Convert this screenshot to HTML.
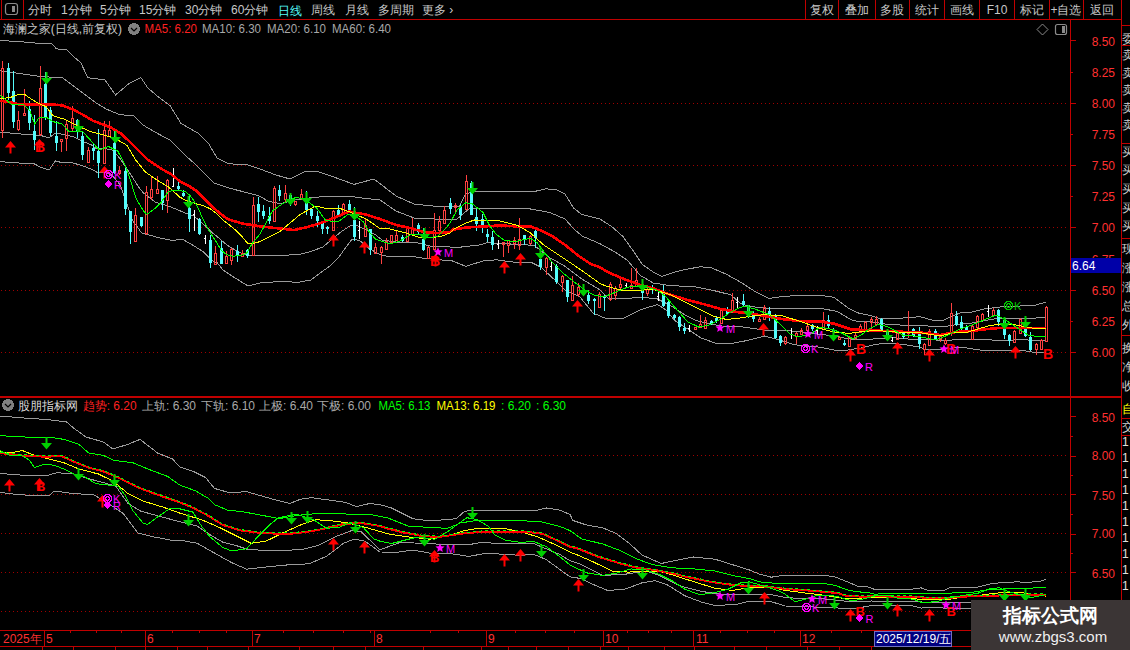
<!DOCTYPE html>
<html><head><meta charset="utf-8">
<style>
html,body{margin:0;padding:0;background:#000;}
body{width:1130px;height:650px;overflow:hidden;position:relative;font-family:"Liberation Sans",sans-serif;}
svg{position:absolute;left:0;top:0;}
text{font-family:"Liberation Sans",sans-serif;}
</style></head><body>
<svg width="1130" height="650" viewBox="0 0 1130 650" shape-rendering="crispEdges">
<rect x="0" y="0" width="1130" height="650" fill="#000"/>
<!-- toolbar -->
<g stroke="#c00000" fill="none">
<line x1="0" y1="19.5" x2="1121" y2="19.5"/>
<line x1="1.5" y1="0" x2="1.5" y2="19"/>
<line x1="23.5" y1="0" x2="23.5" y2="19"/>
<line x1="805.5" y1="0" x2="805.5" y2="19"/>
<line x1="838.5" y1="0" x2="838.5" y2="19"/>
<line x1="875.5" y1="0" x2="875.5" y2="19"/>
<line x1="909.5" y1="0" x2="909.5" y2="19"/>
<line x1="944.5" y1="0" x2="944.5" y2="19"/>
<line x1="979.5" y1="0" x2="979.5" y2="19"/>
<line x1="1014.5" y1="0" x2="1014.5" y2="19"/>
<line x1="1049.5" y1="0" x2="1049.5" y2="19"/>
<line x1="1083.5" y1="0" x2="1083.5" y2="19"/>
<line x1="1121.5" y1="0" x2="1121.5" y2="650"/>
<line x1="1070.5" y1="19" x2="1070.5" y2="646"/>
<line x1="0" y1="396.5" x2="1121" y2="396.5"/>
<line x1="0" y1="397.5" x2="1121" y2="397.5"/>
<line x1="0" y1="630.5" x2="1121" y2="630.5"/>
<line x1="0" y1="646.5" x2="1121" y2="646.5"/>
</g>
<rect x="5.5" y="3.5" width="12" height="11" rx="2.5" fill="none" stroke="#8a8a8a" stroke-width="1.2" shape-rendering="auto"/>
<rect x="12" y="6" width="3" height="6" fill="#8a8a8a"/>
<g font-size="12" fill="#c8c8c8">
<text x="28" y="14">分时</text>
<text x="61" y="14">1分钟</text>
<text x="100" y="14">5分钟</text>
<text x="139" y="14">15分钟</text>
<text x="185" y="14">30分钟</text>
<text x="231" y="14">60分钟</text>
<text x="278" y="15" fill="#54fcfc">日线</text>
<text x="311" y="14">周线</text>
<text x="345" y="14">月线</text>
<text x="378" y="14">多周期</text>
<text x="422" y="14">更多 ›</text>
<g text-anchor="middle">
<text x="822" y="14">复权</text>
<text x="857" y="14">叠加</text>
<text x="892" y="14">多股</text>
<text x="927" y="14">统计</text>
<text x="962" y="14">画线</text>
<text x="997" y="14">F10</text>
<text x="1032" y="14">标记</text>
<text x="1066" y="14">+自选</text>
<text x="1102" y="14">返回</text>
</g>
</g>
<!-- main title -->
<g font-size="12">
<text x="3" y="33" fill="#c8c8c8" textLength="119" lengthAdjust="spacingAndGlyphs">海澜之家(日线,前复权)</text>
<circle cx="134" cy="29" r="6" fill="#808080"/>
<path d="M131,28 L134,31 L137,28" stroke="#000" fill="none" stroke-width="1.2" shape-rendering="auto"/>
<text x="144.5" y="33" fill="#ff2020" textLength="52.5" lengthAdjust="spacingAndGlyphs">MA5: 6.20</text>
<text x="202" y="33" fill="#a8a8a8" textLength="59" lengthAdjust="spacingAndGlyphs">MA10: 6.30</text>
<text x="267" y="33" fill="#a8a8a8" textLength="59" lengthAdjust="spacingAndGlyphs">MA20: 6.10</text>
<text x="332" y="33" fill="#a8a8a8" textLength="59" lengthAdjust="spacingAndGlyphs">MA60: 6.40</text>
</g>
<path d="M1042.5,24 L1048,29.5 L1042.5,35 L1037,29.5 Z" fill="none" stroke="#8a8a8a" shape-rendering="auto"/>
<rect x="1055.5" y="24.5" width="11" height="10" rx="2" fill="none" stroke="#8a8a8a" stroke-width="1.2" shape-rendering="auto"/>
<rect x="1062" y="26" width="3" height="7" fill="#8a8a8a"/>
<!-- main axis -->
<g stroke="#c00000">
<line x1="1070" y1="40.5" x2="1076" y2="40.5"/>
<line x1="1070" y1="72.5" x2="1073" y2="72.5"/>
<line x1="1070" y1="103.5" x2="1076" y2="103.5"/>
<line x1="1070" y1="134.5" x2="1073" y2="134.5"/>
<line x1="1070" y1="165.5" x2="1076" y2="165.5"/>
<line x1="1070" y1="196.5" x2="1073" y2="196.5"/>
<line x1="1070" y1="227.5" x2="1076" y2="227.5"/>
<line x1="1070" y1="259.5" x2="1073" y2="259.5"/>
<line x1="1070" y1="290.5" x2="1076" y2="290.5"/>
<line x1="1070" y1="321.5" x2="1073" y2="321.5"/>
<line x1="1070" y1="352.5" x2="1076" y2="352.5"/>
</g>
<g font-size="12" fill="#ff3030" text-anchor="end">
<text x="1115" y="46">8.50</text>
<text x="1115" y="77">8.25</text>
<text x="1115" y="108">8.00</text>
<text x="1115" y="139">7.75</text>
<text x="1115" y="170">7.50</text>
<text x="1115" y="201">7.25</text>
<text x="1115" y="232">7.00</text>
<text x="1115" y="264">6.75</text>
<text x="1115" y="295">6.50</text>
<text x="1115" y="326">6.25</text>
<text x="1115" y="357">6.00</text>
</g>
<rect x="1071" y="258" width="50" height="15" fill="#0000a8"/>
<text x="1072" y="270" font-size="12" fill="#ffffff">6.64</text>
<line x1="1" y1="103.5" x2="1068" y2="103.5" stroke="#a00000" stroke-dasharray="1 3"/><line x1="1" y1="165.5" x2="1068" y2="165.5" stroke="#a00000" stroke-dasharray="1 3"/><line x1="1" y1="227.5" x2="1068" y2="227.5" stroke="#a00000" stroke-dasharray="1 3"/><line x1="1" y1="290.5" x2="1068" y2="290.5" stroke="#a00000" stroke-dasharray="1 3"/><line x1="1" y1="352.5" x2="1068" y2="352.5" stroke="#a00000" stroke-dasharray="1 3"/>
<polyline points="0.0,40.5 18.5,41.5 34.6,43.0 50.8,43.0 56.6,48.9 67.0,50.0 74.0,57.0 80.8,62.7 87.8,77.7 97.0,78.9 105.0,80.0 115.5,95.0 129.0,83.5 141.0,77.7 147.8,88.0 159.0,97.4 170.0,105.5 181.0,123.5 197.7,133.0 208.8,144.0 217.0,158.0 228.0,163.7 247.6,165.0 260.0,169.0 276.0,175.0 290.0,179.0 304.0,172.0 316.0,171.0 330.0,175.6 354.0,184.4 374.0,179.0 396.0,196.0 414.0,204.0 442.0,207.0 450.0,206.0 459.4,206.0 465.8,194.0 474.5,191.0 504.6,191.0 532.6,192.0 545.5,188.8 556.3,189.8 565.0,194.0 573.5,208.0 582.0,214.6 600.0,219.0 612.3,227.0 623.0,236.6 633.8,251.7 642.5,264.6 653.2,272.0 661.8,276.5 674.8,272.0 687.7,269.0 700.6,266.8 711.4,267.8 726.5,274.3 740.0,281.8 755.8,292.0 768.8,298.5 783.8,296.3 805.4,295.2 820.0,295.2 833.9,297.3 847.7,307.7 858.8,313.2 869.9,315.3 878.2,318.0 892.0,318.8 903.0,318.0 920.0,316.7 932.0,320.0 944.0,320.0 948.0,318.0 960.0,313.0 972.0,312.0 984.0,309.0 1000.0,307.0 1020.0,306.0 1036.0,305.0 1046.0,302.0" fill="none" stroke="#9a9a9a"/>
<polyline points="0.0,70.8 23.0,74.0 41.6,76.6 62.4,77.7 76.0,88.0 85.5,95.0 94.7,102.0 106.0,109.0 120.0,114.7 134.0,115.8 143.0,125.0 154.7,132.0 170.0,140.0 183.9,154.0 197.7,166.5 214.3,183.0 231.0,188.6 242.0,191.4 258.6,195.6 268.0,201.0 280.0,203.8 295.4,200.0 310.8,197.7 330.8,196.0 350.8,196.5 366.0,198.5 380.0,200.0 396.0,211.0 414.0,218.0 434.0,219.0 450.0,220.0 457.0,219.0 470.0,208.0 504.6,208.0 530.5,209.0 549.8,212.5 565.0,219.0 573.5,228.6 582.0,236.0 600.0,243.7 614.5,251.7 627.4,260.3 640.3,275.4 653.2,283.0 666.0,285.0 679.0,286.0 696.3,287.0 713.5,290.5 730.8,294.8 740.0,303.0 747.2,306.0 764.5,308.2 794.6,308.2 820.0,308.4 836.6,311.2 853.2,320.9 869.9,321.6 886.5,324.3 900.3,325.0 920.0,325.0 936.0,327.0 948.0,326.0 960.0,324.0 972.0,323.0 988.0,320.0 1000.0,318.0 1020.0,319.0 1036.0,318.0 1046.0,317.0" fill="none" stroke="#9a9a9a"/>
<polyline points="0.0,132.0 18.5,133.8 40.0,135.4 49.2,137.7 55.4,133.0 64.6,134.6 73.8,137.0 83.0,141.5 90.8,144.6 97.0,149.0 104.6,148.5 112.3,150.0 120.0,158.5 129.2,172.3 140.0,189.0 143.5,193.0 155.0,202.0 170.0,206.6 186.6,213.6 193.9,216.0 205.0,225.7 211.9,232.6 217.4,236.8 227.0,245.0 238.2,252.0 249.3,255.5 260.0,255.5 280.0,255.4 298.5,254.6 310.8,251.5 323.0,247.0 332.3,239.0 341.5,231.5 350.8,225.4 357.0,225.4 366.0,230.0 375.4,234.6 382.0,240.0 396.0,242.0 414.0,242.0 430.0,246.0 450.0,247.0 461.5,247.0 481.0,244.8 487.4,242.6 504.6,243.7 526.0,244.8 534.8,245.8 541.2,251.0 549.8,257.7 565.0,266.3 582.0,279.0 600.0,290.0 608.0,298.0 623.0,299.0 640.3,297.0 657.5,299.0 670.5,305.5 683.4,314.0 696.3,320.6 709.2,323.8 722.0,326.0 740.0,326.5 768.8,330.8 790.3,330.8 811.8,333.0 820.0,334.7 833.9,335.4 847.7,338.9 861.5,339.6 875.4,338.9 892.0,337.5 905.9,338.9 920.0,339.6 936.0,340.0 952.0,340.0 972.0,339.0 992.0,340.0 1008.0,341.0 1020.0,339.0 1036.0,341.0 1046.0,340.0" fill="none" stroke="#9a9a9a"/>
<polyline points="0.0,161.6 18.5,163.0 34.6,164.0 40.0,167.0 49.2,170.0 55.4,160.8 63.0,163.0 70.8,162.3 83.0,166.0 90.8,169.0 98.5,173.0 106.0,172.3 112.3,175.4 120.0,184.6 126.2,201.5 132.3,220.0 141.7,233.0 160.0,238.0 173.0,240.6 182.0,239.0 192.5,245.0 203.5,252.0 211.9,260.3 217.4,263.0 223.0,270.0 232.0,276.0 248.0,286.0 260.0,283.0 280.0,281.5 298.5,282.3 310.8,280.0 320.0,273.0 330.8,265.4 338.5,257.7 346.0,247.0 352.3,239.0 360.0,240.8 369.0,248.5 380.0,254.6 390.0,257.0 410.0,256.0 422.0,258.0 442.0,260.0 450.0,260.0 455.0,262.0 465.8,266.3 483.0,261.0 496.0,259.8 513.2,262.0 530.5,262.0 541.2,267.4 556.3,281.4 565.0,290.0 580.0,297.0 593.0,313.0 605.8,318.5 623.0,318.5 640.3,309.8 657.5,304.5 666.0,310.0 674.8,320.6 687.7,329.0 700.6,337.8 715.0,343.0 730.0,343.7 747.2,340.5 764.5,336.0 777.4,339.4 794.6,344.8 820.0,347.2 833.9,350.0 847.7,350.0 861.5,347.9 875.4,344.4 889.2,343.0 903.0,344.4 920.0,347.2 924.0,349.0 944.0,349.0 960.0,347.0 980.0,350.0 1008.0,351.0 1020.0,350.0 1032.0,352.0 1046.0,352.0" fill="none" stroke="#9a9a9a"/>
<rect x="2" y="61" width="1" height="7" fill="#ff4040"/>
<rect x="2" y="130" width="1" height="8" fill="#ff4040"/>
<rect x="1.5" y="68.5" width="2" height="62" fill="none" stroke="#ff4040"/>
<rect x="8" y="63" width="1" height="37" fill="#54fcfc"/>
<rect x="7" y="68" width="3" height="25" fill="#54fcfc"/>
<rect x="13" y="71" width="1" height="57" fill="#54fcfc"/>
<rect x="12" y="91" width="3" height="31" fill="#54fcfc"/>
<rect x="18" y="111" width="1" height="9" fill="#ff4040"/>
<rect x="18" y="129" width="1" height="2" fill="#ff4040"/>
<rect x="17.5" y="120.5" width="2" height="9" fill="none" stroke="#ff4040"/>
<rect x="24" y="89" width="1" height="24" fill="#ff4040"/>
<rect x="24" y="115" width="1" height="1" fill="#ff4040"/>
<rect x="23.5" y="113.5" width="2" height="2" fill="none" stroke="#ff4040"/>
<rect x="29" y="101" width="1" height="29" fill="#54fcfc"/>
<rect x="28" y="109" width="3" height="14" fill="#54fcfc"/>
<rect x="34" y="115" width="1" height="35" fill="#54fcfc"/>
<rect x="33" y="131" width="3" height="9" fill="#54fcfc"/>
<rect x="40" y="66" width="1" height="22" fill="#ff4040"/>
<rect x="40" y="134" width="1" height="2" fill="#ff4040"/>
<rect x="39.5" y="88.5" width="2" height="46" fill="none" stroke="#ff4040"/>
<rect x="45" y="72" width="1" height="48" fill="#54fcfc"/>
<rect x="44" y="84" width="3" height="34" fill="#54fcfc"/>
<rect x="50" y="107" width="1" height="29" fill="#54fcfc"/>
<rect x="49" y="110" width="3" height="23" fill="#54fcfc"/>
<rect x="56" y="121" width="1" height="30" fill="#54fcfc"/>
<rect x="55" y="136" width="3" height="7" fill="#54fcfc"/>
<rect x="61" y="139" width="1" height="0" fill="#ff4040"/>
<rect x="61" y="141" width="1" height="11" fill="#ff4040"/>
<rect x="60.5" y="139.5" width="2" height="2" fill="none" stroke="#ff4040"/>
<rect x="66" y="120" width="1" height="4" fill="#ff4040"/>
<rect x="66" y="138" width="1" height="13" fill="#ff4040"/>
<rect x="65.5" y="124.5" width="2" height="14" fill="none" stroke="#ff4040"/>
<rect x="72" y="106" width="1" height="12" fill="#ff4040"/>
<rect x="72" y="128" width="1" height="3" fill="#ff4040"/>
<rect x="71.5" y="118.5" width="2" height="10" fill="none" stroke="#ff4040"/>
<rect x="77" y="119" width="1" height="19" fill="#54fcfc"/>
<rect x="76" y="120" width="3" height="12" fill="#54fcfc"/>
<rect x="82" y="132" width="1" height="28" fill="#54fcfc"/>
<rect x="81" y="136" width="3" height="19" fill="#54fcfc"/>
<rect x="88" y="147" width="1" height="3" fill="#ff4040"/>
<rect x="88" y="162" width="1" height="1" fill="#ff4040"/>
<rect x="87.5" y="150.5" width="2" height="12" fill="none" stroke="#ff4040"/>
<rect x="93" y="143" width="1" height="17" fill="#54fcfc"/>
<rect x="92" y="148" width="3" height="3" fill="#54fcfc"/>
<rect x="98" y="129" width="1" height="49" fill="#54fcfc"/>
<rect x="97" y="151" width="3" height="12" fill="#54fcfc"/>
<rect x="104" y="121" width="1" height="9" fill="#ff4040"/>
<rect x="104" y="163" width="1" height="0" fill="#ff4040"/>
<rect x="103.5" y="130.5" width="2" height="33" fill="none" stroke="#ff4040"/>
<rect x="109" y="121" width="1" height="9" fill="#ff4040"/>
<rect x="109" y="136" width="1" height="1" fill="#ff4040"/>
<rect x="108.5" y="130.5" width="2" height="6" fill="none" stroke="#ff4040"/>
<rect x="114" y="130" width="1" height="44" fill="#54fcfc"/>
<rect x="113" y="143" width="3" height="30" fill="#54fcfc"/>
<rect x="119" y="166" width="1" height="4" fill="#ff4040"/>
<rect x="119" y="173" width="1" height="2" fill="#ff4040"/>
<rect x="118.5" y="170.5" width="2" height="3" fill="none" stroke="#ff4040"/>
<rect x="125" y="168" width="1" height="47" fill="#54fcfc"/>
<rect x="124" y="171" width="3" height="38" fill="#54fcfc"/>
<rect x="130" y="211" width="1" height="33" fill="#54fcfc"/>
<rect x="129" y="211" width="3" height="21" fill="#54fcfc"/>
<rect x="135" y="208" width="1" height="7" fill="#ff4040"/>
<rect x="135" y="241" width="1" height="0" fill="#ff4040"/>
<rect x="134.5" y="215.5" width="2" height="26" fill="none" stroke="#ff4040"/>
<rect x="141" y="217" width="1" height="10" fill="#54fcfc"/>
<rect x="140" y="217" width="3" height="9" fill="#54fcfc"/>
<rect x="146" y="186" width="1" height="6" fill="#ff4040"/>
<rect x="146" y="233" width="1" height="2" fill="#ff4040"/>
<rect x="145.5" y="192.5" width="2" height="41" fill="none" stroke="#ff4040"/>
<rect x="151" y="176" width="1" height="13" fill="#ff4040"/>
<rect x="151" y="197" width="1" height="3" fill="#ff4040"/>
<rect x="150.5" y="189.5" width="2" height="8" fill="none" stroke="#ff4040"/>
<rect x="157" y="176" width="1" height="13" fill="#ff4040"/>
<rect x="157" y="193" width="1" height="1" fill="#ff4040"/>
<rect x="156.5" y="189.5" width="2" height="4" fill="none" stroke="#ff4040"/>
<rect x="162" y="190" width="1" height="20" fill="#54fcfc"/>
<rect x="161" y="190" width="3" height="13" fill="#54fcfc"/>
<rect x="167" y="179" width="1" height="1" fill="#ff4040"/>
<rect x="167" y="200" width="1" height="13" fill="#ff4040"/>
<rect x="166.5" y="180.5" width="2" height="20" fill="none" stroke="#ff4040"/>
<rect x="173" y="168" width="1" height="19" fill="#ffffff"/>
<rect x="172" y="186" width="2" height="1" fill="#ffffff"/>
<rect x="178" y="181" width="1" height="9" fill="#54fcfc"/>
<rect x="177" y="186" width="3" height="3" fill="#54fcfc"/>
<rect x="183" y="190" width="1" height="7" fill="#54fcfc"/>
<rect x="182" y="193" width="3" height="3" fill="#54fcfc"/>
<rect x="189" y="196" width="1" height="36" fill="#54fcfc"/>
<rect x="188" y="208" width="3" height="11" fill="#54fcfc"/>
<rect x="194" y="210" width="1" height="21" fill="#ffffff"/>
<rect x="193" y="214" width="2" height="1" fill="#ffffff"/>
<rect x="199" y="218" width="1" height="17" fill="#54fcfc"/>
<rect x="198" y="219" width="3" height="15" fill="#54fcfc"/>
<rect x="205" y="235" width="1" height="9" fill="#ffffff"/>
<rect x="204" y="238" width="2" height="1" fill="#ffffff"/>
<rect x="210" y="235" width="1" height="33" fill="#54fcfc"/>
<rect x="209" y="240" width="3" height="23" fill="#54fcfc"/>
<rect x="215" y="246" width="1" height="7" fill="#ff4040"/>
<rect x="215" y="264" width="1" height="1" fill="#ff4040"/>
<rect x="214.5" y="253.5" width="2" height="11" fill="none" stroke="#ff4040"/>
<rect x="221" y="241" width="1" height="23" fill="#54fcfc"/>
<rect x="220" y="248" width="3" height="16" fill="#54fcfc"/>
<rect x="226" y="251" width="1" height="5" fill="#ff4040"/>
<rect x="226" y="263" width="1" height="1" fill="#ff4040"/>
<rect x="225.5" y="256.5" width="2" height="7" fill="none" stroke="#ff4040"/>
<rect x="231" y="248" width="1" height="1" fill="#ff4040"/>
<rect x="231" y="260" width="1" height="5" fill="#ff4040"/>
<rect x="230.5" y="249.5" width="2" height="11" fill="none" stroke="#ff4040"/>
<rect x="237" y="245" width="1" height="17" fill="#54fcfc"/>
<rect x="236" y="251" width="3" height="5" fill="#54fcfc"/>
<rect x="242" y="250" width="1" height="3" fill="#ff4040"/>
<rect x="242" y="256" width="1" height="1" fill="#ff4040"/>
<rect x="241.5" y="253.5" width="2" height="3" fill="none" stroke="#ff4040"/>
<rect x="247" y="249" width="1" height="9" fill="#54fcfc"/>
<rect x="246" y="250" width="3" height="6" fill="#54fcfc"/>
<rect x="253" y="197" width="1" height="8" fill="#ff4040"/>
<rect x="253" y="255" width="1" height="0" fill="#ff4040"/>
<rect x="252.5" y="205.5" width="2" height="50" fill="none" stroke="#ff4040"/>
<rect x="258" y="197" width="1" height="25" fill="#54fcfc"/>
<rect x="257" y="204" width="3" height="8" fill="#54fcfc"/>
<rect x="263" y="205" width="1" height="14" fill="#54fcfc"/>
<rect x="262" y="211" width="3" height="5" fill="#54fcfc"/>
<rect x="269" y="207" width="1" height="17" fill="#54fcfc"/>
<rect x="268" y="216" width="3" height="5" fill="#54fcfc"/>
<rect x="274" y="186" width="1" height="2" fill="#ff4040"/>
<rect x="274" y="221" width="1" height="1" fill="#ff4040"/>
<rect x="273.5" y="188.5" width="2" height="33" fill="none" stroke="#ff4040"/>
<rect x="279" y="185" width="1" height="16" fill="#54fcfc"/>
<rect x="278" y="190" width="3" height="6" fill="#54fcfc"/>
<rect x="285" y="185" width="1" height="8" fill="#ff4040"/>
<rect x="285" y="199" width="1" height="3" fill="#ff4040"/>
<rect x="284.5" y="193.5" width="2" height="6" fill="none" stroke="#ff4040"/>
<rect x="290" y="193" width="1" height="13" fill="#54fcfc"/>
<rect x="289" y="195" width="3" height="5" fill="#54fcfc"/>
<rect x="295" y="201" width="1" height="0" fill="#ff4040"/>
<rect x="295" y="204" width="1" height="2" fill="#ff4040"/>
<rect x="294.5" y="201.5" width="2" height="3" fill="none" stroke="#ff4040"/>
<rect x="301" y="189" width="1" height="5" fill="#ff4040"/>
<rect x="301" y="198" width="1" height="2" fill="#ff4040"/>
<rect x="300.5" y="194.5" width="2" height="4" fill="none" stroke="#ff4040"/>
<rect x="306" y="191" width="1" height="24" fill="#54fcfc"/>
<rect x="305" y="203" width="3" height="7" fill="#54fcfc"/>
<rect x="311" y="208" width="1" height="11" fill="#54fcfc"/>
<rect x="310" y="209" width="3" height="7" fill="#54fcfc"/>
<rect x="317" y="211" width="1" height="16" fill="#54fcfc"/>
<rect x="316" y="216" width="3" height="5" fill="#54fcfc"/>
<rect x="322" y="221" width="1" height="13" fill="#54fcfc"/>
<rect x="321" y="223" width="3" height="6" fill="#54fcfc"/>
<rect x="327" y="226" width="1" height="8" fill="#54fcfc"/>
<rect x="326" y="227" width="3" height="2" fill="#54fcfc"/>
<rect x="333" y="210" width="1" height="1" fill="#ff4040"/>
<rect x="333" y="230" width="1" height="1" fill="#ff4040"/>
<rect x="332.5" y="211.5" width="2" height="19" fill="none" stroke="#ff4040"/>
<rect x="338" y="205" width="1" height="12" fill="#54fcfc"/>
<rect x="337" y="210" width="3" height="6" fill="#54fcfc"/>
<rect x="343" y="203" width="1" height="1" fill="#ff4040"/>
<rect x="343" y="213" width="1" height="1" fill="#ff4040"/>
<rect x="342.5" y="204.5" width="2" height="9" fill="none" stroke="#ff4040"/>
<rect x="349" y="200" width="1" height="11" fill="#54fcfc"/>
<rect x="348" y="204" width="3" height="6" fill="#54fcfc"/>
<rect x="354" y="207" width="1" height="34" fill="#54fcfc"/>
<rect x="353" y="220" width="3" height="17" fill="#54fcfc"/>
<rect x="359" y="221" width="1" height="18" fill="#ffffff"/>
<rect x="358" y="230" width="2" height="1" fill="#ffffff"/>
<rect x="365" y="219" width="1" height="6" fill="#ff4040"/>
<rect x="365" y="236" width="1" height="1" fill="#ff4040"/>
<rect x="364.5" y="225.5" width="2" height="11" fill="none" stroke="#ff4040"/>
<rect x="370" y="229" width="1" height="26" fill="#54fcfc"/>
<rect x="369" y="229" width="3" height="21" fill="#54fcfc"/>
<rect x="375" y="243" width="1" height="4" fill="#ff4040"/>
<rect x="375" y="253" width="1" height="1" fill="#ff4040"/>
<rect x="374.5" y="247.5" width="2" height="6" fill="none" stroke="#ff4040"/>
<rect x="381" y="246" width="1" height="1" fill="#ff4040"/>
<rect x="381" y="252" width="1" height="12" fill="#ff4040"/>
<rect x="380.5" y="247.5" width="2" height="5" fill="none" stroke="#ff4040"/>
<rect x="386" y="238" width="1" height="3" fill="#ff4040"/>
<rect x="386" y="249" width="1" height="1" fill="#ff4040"/>
<rect x="385.5" y="241.5" width="2" height="8" fill="none" stroke="#ff4040"/>
<rect x="391" y="235" width="1" height="0" fill="#ff4040"/>
<rect x="391" y="242" width="1" height="2" fill="#ff4040"/>
<rect x="390.5" y="235.5" width="2" height="7" fill="none" stroke="#ff4040"/>
<rect x="396" y="231" width="1" height="4" fill="#ff4040"/>
<rect x="396" y="240" width="1" height="1" fill="#ff4040"/>
<rect x="395.5" y="235.5" width="2" height="5" fill="none" stroke="#ff4040"/>
<rect x="402" y="235" width="1" height="7" fill="#54fcfc"/>
<rect x="401" y="237" width="3" height="4" fill="#54fcfc"/>
<rect x="407" y="226" width="1" height="2" fill="#ff4040"/>
<rect x="407" y="241" width="1" height="1" fill="#ff4040"/>
<rect x="406.5" y="228.5" width="2" height="13" fill="none" stroke="#ff4040"/>
<rect x="412" y="218" width="1" height="10" fill="#ff4040"/>
<rect x="412" y="234" width="1" height="2" fill="#ff4040"/>
<rect x="411.5" y="228.5" width="2" height="6" fill="none" stroke="#ff4040"/>
<rect x="418" y="223" width="1" height="11" fill="#54fcfc"/>
<rect x="417" y="225" width="3" height="7" fill="#54fcfc"/>
<rect x="423" y="228" width="1" height="23" fill="#54fcfc"/>
<rect x="422" y="239" width="3" height="11" fill="#54fcfc"/>
<rect x="428" y="246" width="1" height="1" fill="#ff4040"/>
<rect x="428" y="258" width="1" height="1" fill="#ff4040"/>
<rect x="427.5" y="247.5" width="2" height="11" fill="none" stroke="#ff4040"/>
<rect x="434" y="213" width="1" height="17" fill="#ff4040"/>
<rect x="434" y="249" width="1" height="1" fill="#ff4040"/>
<rect x="433.5" y="230.5" width="2" height="19" fill="none" stroke="#ff4040"/>
<rect x="439" y="216" width="1" height="5" fill="#ff4040"/>
<rect x="439" y="230" width="1" height="1" fill="#ff4040"/>
<rect x="438.5" y="221.5" width="2" height="9" fill="none" stroke="#ff4040"/>
<rect x="444" y="206" width="1" height="4" fill="#ff4040"/>
<rect x="444" y="223" width="1" height="1" fill="#ff4040"/>
<rect x="443.5" y="210.5" width="2" height="13" fill="none" stroke="#ff4040"/>
<rect x="450" y="198" width="1" height="16" fill="#54fcfc"/>
<rect x="449" y="203" width="3" height="6" fill="#54fcfc"/>
<rect x="455" y="203" width="1" height="2" fill="#ff4040"/>
<rect x="455" y="207" width="1" height="5" fill="#ff4040"/>
<rect x="454.5" y="205.5" width="2" height="2" fill="none" stroke="#ff4040"/>
<rect x="460" y="204" width="1" height="16" fill="#54fcfc"/>
<rect x="459" y="207" width="3" height="8" fill="#54fcfc"/>
<rect x="466" y="175" width="1" height="6" fill="#ff4040"/>
<rect x="466" y="209" width="1" height="1" fill="#ff4040"/>
<rect x="465.5" y="181.5" width="2" height="28" fill="none" stroke="#ff4040"/>
<rect x="471" y="181" width="1" height="34" fill="#54fcfc"/>
<rect x="470" y="183" width="3" height="32" fill="#54fcfc"/>
<rect x="476" y="209" width="1" height="22" fill="#54fcfc"/>
<rect x="475" y="217" width="3" height="7" fill="#54fcfc"/>
<rect x="482" y="214" width="1" height="19" fill="#54fcfc"/>
<rect x="481" y="219" width="3" height="9" fill="#54fcfc"/>
<rect x="487" y="229" width="1" height="13" fill="#54fcfc"/>
<rect x="486" y="234" width="3" height="3" fill="#54fcfc"/>
<rect x="492" y="231" width="1" height="19" fill="#54fcfc"/>
<rect x="491" y="237" width="3" height="8" fill="#54fcfc"/>
<rect x="498" y="240" width="1" height="9" fill="#ffffff"/>
<rect x="497" y="244" width="2" height="1" fill="#ffffff"/>
<rect x="503" y="242" width="1" height="0" fill="#ff4040"/>
<rect x="503" y="244" width="1" height="13" fill="#ff4040"/>
<rect x="502.5" y="242.5" width="2" height="2" fill="none" stroke="#ff4040"/>
<rect x="508" y="240" width="1" height="0" fill="#ff4040"/>
<rect x="508" y="245" width="1" height="8" fill="#ff4040"/>
<rect x="507.5" y="240.5" width="2" height="5" fill="none" stroke="#ff4040"/>
<rect x="514" y="237" width="1" height="3" fill="#ff4040"/>
<rect x="514" y="243" width="1" height="6" fill="#ff4040"/>
<rect x="513.5" y="240.5" width="2" height="3" fill="none" stroke="#ff4040"/>
<rect x="519" y="218" width="1" height="21" fill="#ff4040"/>
<rect x="519" y="245" width="1" height="5" fill="#ff4040"/>
<rect x="518.5" y="239.5" width="2" height="6" fill="none" stroke="#ff4040"/>
<rect x="524" y="235" width="1" height="10" fill="#54fcfc"/>
<rect x="523" y="235" width="3" height="4" fill="#54fcfc"/>
<rect x="530" y="235" width="1" height="1" fill="#ff4040"/>
<rect x="530" y="243" width="1" height="2" fill="#ff4040"/>
<rect x="529.5" y="236.5" width="2" height="7" fill="none" stroke="#ff4040"/>
<rect x="535" y="230" width="1" height="18" fill="#54fcfc"/>
<rect x="534" y="231" width="3" height="7" fill="#54fcfc"/>
<rect x="540" y="248" width="1" height="22" fill="#54fcfc"/>
<rect x="539" y="259" width="3" height="8" fill="#54fcfc"/>
<rect x="546" y="257" width="1" height="1" fill="#ff4040"/>
<rect x="546" y="267" width="1" height="8" fill="#ff4040"/>
<rect x="545.5" y="258.5" width="2" height="9" fill="none" stroke="#ff4040"/>
<rect x="551" y="261" width="1" height="10" fill="#ffffff"/>
<rect x="550" y="266" width="2" height="1" fill="#ffffff"/>
<rect x="556" y="264" width="1" height="20" fill="#54fcfc"/>
<rect x="555" y="266" width="3" height="16" fill="#54fcfc"/>
<rect x="562" y="275" width="1" height="1" fill="#ff4040"/>
<rect x="562" y="282" width="1" height="10" fill="#ff4040"/>
<rect x="561.5" y="276.5" width="2" height="6" fill="none" stroke="#ff4040"/>
<rect x="567" y="280" width="1" height="22" fill="#54fcfc"/>
<rect x="566" y="280" width="3" height="17" fill="#54fcfc"/>
<rect x="572" y="276" width="1" height="9" fill="#ff4040"/>
<rect x="572" y="300" width="1" height="1" fill="#ff4040"/>
<rect x="571.5" y="285.5" width="2" height="15" fill="none" stroke="#ff4040"/>
<rect x="578" y="283" width="1" height="4" fill="#ff4040"/>
<rect x="578" y="294" width="1" height="3" fill="#ff4040"/>
<rect x="577.5" y="287.5" width="2" height="7" fill="none" stroke="#ff4040"/>
<rect x="583" y="288" width="1" height="8" fill="#54fcfc"/>
<rect x="582" y="290" width="3" height="5" fill="#54fcfc"/>
<rect x="588" y="290" width="1" height="14" fill="#54fcfc"/>
<rect x="587" y="295" width="3" height="6" fill="#54fcfc"/>
<rect x="594" y="298" width="1" height="17" fill="#54fcfc"/>
<rect x="593" y="299" width="3" height="2" fill="#54fcfc"/>
<rect x="599" y="292" width="1" height="2" fill="#ff4040"/>
<rect x="599" y="307" width="1" height="1" fill="#ff4040"/>
<rect x="598.5" y="294.5" width="2" height="13" fill="none" stroke="#ff4040"/>
<rect x="604" y="295" width="1" height="16" fill="#54fcfc"/>
<rect x="603" y="296" width="3" height="2" fill="#54fcfc"/>
<rect x="610" y="282" width="1" height="2" fill="#ff4040"/>
<rect x="610" y="299" width="1" height="2" fill="#ff4040"/>
<rect x="609.5" y="284.5" width="2" height="15" fill="none" stroke="#ff4040"/>
<rect x="615" y="286" width="1" height="2" fill="#ff4040"/>
<rect x="615" y="295" width="1" height="5" fill="#ff4040"/>
<rect x="614.5" y="288.5" width="2" height="7" fill="none" stroke="#ff4040"/>
<rect x="620" y="279" width="1" height="5" fill="#ff4040"/>
<rect x="620" y="287" width="1" height="2" fill="#ff4040"/>
<rect x="619.5" y="284.5" width="2" height="3" fill="none" stroke="#ff4040"/>
<rect x="626" y="283" width="1" height="4" fill="#ffffff"/>
<rect x="625" y="285" width="2" height="1" fill="#ffffff"/>
<rect x="631" y="268" width="1" height="17" fill="#ff4040"/>
<rect x="631" y="288" width="1" height="0" fill="#ff4040"/>
<rect x="630.5" y="285.5" width="2" height="3" fill="none" stroke="#ff4040"/>
<rect x="636" y="268" width="1" height="12" fill="#ff4040"/>
<rect x="636" y="286" width="1" height="0" fill="#ff4040"/>
<rect x="635.5" y="280.5" width="2" height="6" fill="none" stroke="#ff4040"/>
<rect x="642" y="281" width="1" height="19" fill="#54fcfc"/>
<rect x="641" y="290" width="3" height="3" fill="#54fcfc"/>
<rect x="647" y="287" width="1" height="2" fill="#ff4040"/>
<rect x="647" y="293" width="1" height="3" fill="#ff4040"/>
<rect x="646.5" y="289.5" width="2" height="4" fill="none" stroke="#ff4040"/>
<rect x="652" y="285" width="1" height="9" fill="#54fcfc"/>
<rect x="651" y="287" width="3" height="2" fill="#54fcfc"/>
<rect x="658" y="290" width="1" height="11" fill="#ffffff"/>
<rect x="657" y="296" width="2" height="1" fill="#ffffff"/>
<rect x="663" y="285" width="1" height="22" fill="#54fcfc"/>
<rect x="662" y="292" width="3" height="14" fill="#54fcfc"/>
<rect x="668" y="301" width="1" height="17" fill="#54fcfc"/>
<rect x="667" y="302" width="3" height="14" fill="#54fcfc"/>
<rect x="674" y="314" width="1" height="6" fill="#54fcfc"/>
<rect x="673" y="315" width="3" height="3" fill="#54fcfc"/>
<rect x="679" y="316" width="1" height="15" fill="#54fcfc"/>
<rect x="678" y="317" width="3" height="10" fill="#54fcfc"/>
<rect x="684" y="323" width="1" height="11" fill="#54fcfc"/>
<rect x="683" y="328" width="3" height="3" fill="#54fcfc"/>
<rect x="689" y="325" width="1" height="7" fill="#ffffff"/>
<rect x="688" y="328" width="2" height="1" fill="#ffffff"/>
<rect x="695" y="327" width="1" height="0" fill="#ff4040"/>
<rect x="695" y="329" width="1" height="1" fill="#ff4040"/>
<rect x="694.5" y="327.5" width="2" height="2" fill="none" stroke="#ff4040"/>
<rect x="700" y="315" width="1" height="9" fill="#ff4040"/>
<rect x="700" y="327" width="1" height="1" fill="#ff4040"/>
<rect x="699.5" y="324.5" width="2" height="3" fill="none" stroke="#ff4040"/>
<rect x="705" y="317" width="1" height="3" fill="#ff4040"/>
<rect x="705" y="328" width="1" height="1" fill="#ff4040"/>
<rect x="704.5" y="320.5" width="2" height="8" fill="none" stroke="#ff4040"/>
<rect x="711" y="320" width="1" height="5" fill="#54fcfc"/>
<rect x="710" y="321" width="3" height="3" fill="#54fcfc"/>
<rect x="716" y="316" width="1" height="7" fill="#54fcfc"/>
<rect x="715" y="318" width="3" height="3" fill="#54fcfc"/>
<rect x="721" y="309" width="1" height="1" fill="#ff4040"/>
<rect x="721" y="323" width="1" height="1" fill="#ff4040"/>
<rect x="720.5" y="310.5" width="2" height="13" fill="none" stroke="#ff4040"/>
<rect x="727" y="307" width="1" height="8" fill="#54fcfc"/>
<rect x="726" y="310" width="3" height="4" fill="#54fcfc"/>
<rect x="732" y="293" width="1" height="7" fill="#ff4040"/>
<rect x="732" y="312" width="1" height="1" fill="#ff4040"/>
<rect x="731.5" y="300.5" width="2" height="12" fill="none" stroke="#ff4040"/>
<rect x="737" y="297" width="1" height="11" fill="#ffffff"/>
<rect x="736" y="302" width="2" height="1" fill="#ffffff"/>
<rect x="743" y="294" width="1" height="12" fill="#54fcfc"/>
<rect x="742" y="301" width="3" height="4" fill="#54fcfc"/>
<rect x="748" y="305" width="1" height="13" fill="#54fcfc"/>
<rect x="747" y="305" width="3" height="12" fill="#54fcfc"/>
<rect x="753" y="311" width="1" height="11" fill="#54fcfc"/>
<rect x="752" y="315" width="3" height="4" fill="#54fcfc"/>
<rect x="759" y="317" width="1" height="2" fill="#ff4040"/>
<rect x="759" y="321" width="1" height="1" fill="#ff4040"/>
<rect x="758.5" y="319.5" width="2" height="2" fill="none" stroke="#ff4040"/>
<rect x="764" y="305" width="1" height="2" fill="#ff4040"/>
<rect x="764" y="319" width="1" height="1" fill="#ff4040"/>
<rect x="763.5" y="307.5" width="2" height="12" fill="none" stroke="#ff4040"/>
<rect x="769" y="307" width="1" height="14" fill="#54fcfc"/>
<rect x="768" y="311" width="3" height="5" fill="#54fcfc"/>
<rect x="775" y="314" width="1" height="25" fill="#54fcfc"/>
<rect x="774" y="316" width="3" height="22" fill="#54fcfc"/>
<rect x="780" y="335" width="1" height="11" fill="#54fcfc"/>
<rect x="779" y="336" width="3" height="7" fill="#54fcfc"/>
<rect x="785" y="336" width="1" height="1" fill="#ff4040"/>
<rect x="785" y="343" width="1" height="2" fill="#ff4040"/>
<rect x="784.5" y="337.5" width="2" height="6" fill="none" stroke="#ff4040"/>
<rect x="791" y="328" width="1" height="11" fill="#ffffff"/>
<rect x="790" y="334" width="2" height="1" fill="#ffffff"/>
<rect x="796" y="332" width="1" height="1" fill="#ff4040"/>
<rect x="796" y="336" width="1" height="8" fill="#ff4040"/>
<rect x="795.5" y="333.5" width="2" height="3" fill="none" stroke="#ff4040"/>
<rect x="801" y="328" width="1" height="2" fill="#ff4040"/>
<rect x="801" y="334" width="1" height="1" fill="#ff4040"/>
<rect x="800.5" y="330.5" width="2" height="4" fill="none" stroke="#ff4040"/>
<rect x="807" y="323" width="1" height="3" fill="#ff4040"/>
<rect x="807" y="330" width="1" height="1" fill="#ff4040"/>
<rect x="806.5" y="326.5" width="2" height="4" fill="none" stroke="#ff4040"/>
<rect x="812" y="324" width="1" height="7" fill="#54fcfc"/>
<rect x="811" y="325" width="3" height="4" fill="#54fcfc"/>
<rect x="817" y="326" width="1" height="9" fill="#ffffff"/>
<rect x="816" y="330" width="2" height="1" fill="#ffffff"/>
<rect x="823" y="312" width="1" height="8" fill="#ff4040"/>
<rect x="823" y="329" width="1" height="1" fill="#ff4040"/>
<rect x="822.5" y="320.5" width="2" height="9" fill="none" stroke="#ff4040"/>
<rect x="828" y="315" width="1" height="13" fill="#54fcfc"/>
<rect x="827" y="320" width="3" height="6" fill="#54fcfc"/>
<rect x="833" y="328" width="1" height="6" fill="#54fcfc"/>
<rect x="832" y="330" width="3" height="2" fill="#54fcfc"/>
<rect x="839" y="336" width="1" height="1" fill="#ff4040"/>
<rect x="839" y="339" width="1" height="1" fill="#ff4040"/>
<rect x="838.5" y="337.5" width="2" height="2" fill="none" stroke="#ff4040"/>
<rect x="844" y="340" width="1" height="6" fill="#54fcfc"/>
<rect x="843" y="343" width="3" height="2" fill="#54fcfc"/>
<rect x="849" y="337" width="1" height="0" fill="#ff4040"/>
<rect x="849" y="346" width="1" height="0" fill="#ff4040"/>
<rect x="848.5" y="337.5" width="2" height="9" fill="none" stroke="#ff4040"/>
<rect x="855" y="333" width="1" height="2" fill="#ff4040"/>
<rect x="855" y="338" width="1" height="2" fill="#ff4040"/>
<rect x="854.5" y="335.5" width="2" height="3" fill="none" stroke="#ff4040"/>
<rect x="860" y="324" width="1" height="2" fill="#ff4040"/>
<rect x="860" y="332" width="1" height="1" fill="#ff4040"/>
<rect x="859.5" y="326.5" width="2" height="6" fill="none" stroke="#ff4040"/>
<rect x="865" y="321" width="1" height="1" fill="#ff4040"/>
<rect x="865" y="329" width="1" height="1" fill="#ff4040"/>
<rect x="864.5" y="322.5" width="2" height="7" fill="none" stroke="#ff4040"/>
<rect x="871" y="317" width="1" height="2" fill="#ff4040"/>
<rect x="871" y="322" width="1" height="7" fill="#ff4040"/>
<rect x="870.5" y="319.5" width="2" height="3" fill="none" stroke="#ff4040"/>
<rect x="876" y="316" width="1" height="3" fill="#ff4040"/>
<rect x="876" y="324" width="1" height="1" fill="#ff4040"/>
<rect x="875.5" y="319.5" width="2" height="5" fill="none" stroke="#ff4040"/>
<rect x="881" y="318" width="1" height="13" fill="#54fcfc"/>
<rect x="880" y="319" width="3" height="11" fill="#54fcfc"/>
<rect x="887" y="329" width="1" height="12" fill="#54fcfc"/>
<rect x="886" y="331" width="3" height="9" fill="#54fcfc"/>
<rect x="892" y="337" width="1" height="5" fill="#ffffff"/>
<rect x="891" y="340" width="2" height="1" fill="#ffffff"/>
<rect x="897" y="331" width="1" height="2" fill="#ff4040"/>
<rect x="897" y="339" width="1" height="1" fill="#ff4040"/>
<rect x="896.5" y="333.5" width="2" height="6" fill="none" stroke="#ff4040"/>
<rect x="903" y="332" width="1" height="7" fill="#54fcfc"/>
<rect x="902" y="333" width="3" height="4" fill="#54fcfc"/>
<rect x="908" y="311" width="1" height="20" fill="#ff4040"/>
<rect x="908" y="333" width="1" height="5" fill="#ff4040"/>
<rect x="907.5" y="331.5" width="2" height="2" fill="none" stroke="#ff4040"/>
<rect x="913" y="328" width="1" height="9" fill="#54fcfc"/>
<rect x="912" y="329" width="3" height="7" fill="#54fcfc"/>
<rect x="919" y="327" width="1" height="22" fill="#54fcfc"/>
<rect x="918" y="334" width="3" height="10" fill="#54fcfc"/>
<rect x="924" y="343" width="1" height="1" fill="#ff4040"/>
<rect x="924" y="349" width="1" height="6" fill="#ff4040"/>
<rect x="923.5" y="344.5" width="2" height="5" fill="none" stroke="#ff4040"/>
<rect x="929" y="329" width="1" height="2" fill="#ff4040"/>
<rect x="929" y="345" width="1" height="1" fill="#ff4040"/>
<rect x="928.5" y="331.5" width="2" height="14" fill="none" stroke="#ff4040"/>
<rect x="935" y="329" width="1" height="11" fill="#54fcfc"/>
<rect x="934" y="331" width="3" height="8" fill="#54fcfc"/>
<rect x="940" y="335" width="1" height="1" fill="#ff4040"/>
<rect x="940" y="339" width="1" height="3" fill="#ff4040"/>
<rect x="939.5" y="336.5" width="2" height="3" fill="none" stroke="#ff4040"/>
<rect x="945" y="338" width="1" height="2" fill="#ff4040"/>
<rect x="945" y="343" width="1" height="2" fill="#ff4040"/>
<rect x="944.5" y="340.5" width="2" height="3" fill="none" stroke="#ff4040"/>
<rect x="951" y="303" width="1" height="10" fill="#ff4040"/>
<rect x="951" y="332" width="1" height="4" fill="#ff4040"/>
<rect x="950.5" y="313.5" width="2" height="19" fill="none" stroke="#ff4040"/>
<rect x="956" y="311" width="1" height="15" fill="#54fcfc"/>
<rect x="955" y="316" width="3" height="9" fill="#54fcfc"/>
<rect x="961" y="316" width="1" height="16" fill="#54fcfc"/>
<rect x="960" y="322" width="3" height="7" fill="#54fcfc"/>
<rect x="966" y="325" width="1" height="7" fill="#54fcfc"/>
<rect x="965" y="327" width="3" height="4" fill="#54fcfc"/>
<rect x="972" y="325" width="1" height="1" fill="#ff4040"/>
<rect x="972" y="339" width="1" height="1" fill="#ff4040"/>
<rect x="971.5" y="326.5" width="2" height="13" fill="none" stroke="#ff4040"/>
<rect x="977" y="315" width="1" height="1" fill="#ff4040"/>
<rect x="977" y="327" width="1" height="2" fill="#ff4040"/>
<rect x="976.5" y="316.5" width="2" height="11" fill="none" stroke="#ff4040"/>
<rect x="982" y="313" width="1" height="1" fill="#ff4040"/>
<rect x="982" y="320" width="1" height="1" fill="#ff4040"/>
<rect x="981.5" y="314.5" width="2" height="6" fill="none" stroke="#ff4040"/>
<rect x="988" y="305" width="1" height="12" fill="#ffffff"/>
<rect x="987" y="311" width="2" height="1" fill="#ffffff"/>
<rect x="993" y="308" width="1" height="2" fill="#ff4040"/>
<rect x="993" y="315" width="1" height="1" fill="#ff4040"/>
<rect x="992.5" y="310.5" width="2" height="5" fill="none" stroke="#ff4040"/>
<rect x="998" y="309" width="1" height="17" fill="#54fcfc"/>
<rect x="997" y="310" width="3" height="12" fill="#54fcfc"/>
<rect x="1004" y="320" width="1" height="19" fill="#54fcfc"/>
<rect x="1003" y="320" width="3" height="15" fill="#54fcfc"/>
<rect x="1009" y="334" width="1" height="12" fill="#54fcfc"/>
<rect x="1008" y="335" width="3" height="6" fill="#54fcfc"/>
<rect x="1014" y="330" width="1" height="1" fill="#ff4040"/>
<rect x="1014" y="342" width="1" height="1" fill="#ff4040"/>
<rect x="1013.5" y="331.5" width="2" height="11" fill="none" stroke="#ff4040"/>
<rect x="1020" y="318" width="1" height="1" fill="#ff4040"/>
<rect x="1020" y="333" width="1" height="1" fill="#ff4040"/>
<rect x="1019.5" y="319.5" width="2" height="14" fill="none" stroke="#ff4040"/>
<rect x="1025" y="323" width="1" height="14" fill="#54fcfc"/>
<rect x="1024" y="324" width="3" height="12" fill="#54fcfc"/>
<rect x="1030" y="332" width="1" height="19" fill="#54fcfc"/>
<rect x="1029" y="337" width="3" height="13" fill="#54fcfc"/>
<rect x="1036" y="343" width="1" height="1" fill="#ff4040"/>
<rect x="1036" y="349" width="1" height="6" fill="#ff4040"/>
<rect x="1035.5" y="344.5" width="2" height="5" fill="none" stroke="#ff4040"/>
<rect x="1041" y="339" width="1" height="1" fill="#ff4040"/>
<rect x="1041" y="349" width="1" height="1" fill="#ff4040"/>
<rect x="1040.5" y="340.5" width="2" height="9" fill="none" stroke="#ff4040"/>
<rect x="1046" y="306" width="1" height="1" fill="#ff4040"/>
<rect x="1046" y="341" width="1" height="1" fill="#ff4040"/>
<rect x="1045.5" y="307.5" width="2" height="34" fill="none" stroke="#ff4040"/>
<polyline points="0.0,100.8 9.2,102.0 18.5,104.3 32.3,104.3 50.8,104.3 62.4,105.4 71.6,109.0 83.0,114.7 92.4,120.5 101.6,124.0 110.8,127.4 122.0,134.3 134.0,145.9 147.8,159.7 161.6,169.0 170.0,173.4 180.0,181.4 188.3,185.5 196.6,191.0 205.0,199.4 213.2,207.7 221.5,214.6 228.5,219.5 235.4,221.5 242.3,223.6 252.0,225.0 260.0,226.4 280.0,228.5 293.8,230.0 307.7,227.0 323.0,222.3 338.5,216.0 349.0,211.5 366.0,214.6 380.0,219.0 396.0,225.0 410.0,228.0 424.0,232.0 436.0,233.0 450.0,232.0 453.0,229.7 465.8,227.5 483.0,226.5 500.3,225.4 517.5,226.5 530.5,226.5 539.0,229.7 552.0,236.0 565.0,244.8 578.0,255.5 590.8,264.0 600.0,267.4 610.0,273.2 623.0,278.6 640.3,285.0 653.2,288.3 670.5,294.8 687.7,300.0 705.0,304.5 720.0,308.8 740.0,312.5 751.5,313.5 768.8,316.8 781.7,319.0 799.0,321.0 820.0,321.6 833.9,323.6 850.5,329.2 861.5,329.9 875.4,330.6 892.0,331.2 905.9,332.0 920.0,332.4 940.0,335.0 956.0,332.0 972.0,331.0 988.0,329.0 1000.0,328.0 1020.0,328.0 1046.0,328.0" fill="none" stroke="#ff0000" stroke-width="2.6"/>
<polyline points="0.0,98.5 9.2,97.8 18.5,94.6 25.4,95.0 32.3,99.7 40.4,104.3 46.0,106.6 53.0,115.8 64.7,119.3 74.0,124.0 90.0,131.5 103.8,135.0 115.4,138.5 127.0,145.4 136.0,160.4 145.3,172.0 156.9,180.0 168.4,186.9 180.0,197.3 186.9,200.8 195.2,203.5 203.5,205.6 210.5,209.0 216.0,213.0 221.5,218.8 228.5,224.3 235.4,229.9 241.0,235.4 247.9,243.7 252.0,243.7 260.0,241.6 280.0,231.5 289.0,223.8 300.0,214.6 315.4,206.0 326.0,208.5 341.5,209.0 352.3,213.0 366.0,219.0 380.0,228.5 390.0,229.0 406.0,233.0 418.0,237.0 430.0,238.0 442.0,236.0 450.0,233.0 453.0,229.7 465.8,223.0 474.5,220.0 500.3,221.0 517.5,225.4 530.5,233.0 543.4,244.8 556.3,253.4 569.2,262.0 582.0,270.6 600.0,283.5 605.8,286.0 623.0,290.5 636.0,290.5 653.2,289.4 670.5,294.8 687.7,303.4 700.6,309.8 713.5,316.3 726.5,319.5 740.0,318.0 747.2,316.8 764.5,314.6 781.7,315.7 799.0,321.0 820.0,328.5 836.6,332.6 850.5,333.3 864.3,331.2 878.2,330.6 894.8,332.0 908.6,332.0 920.0,332.6 940.0,336.0 952.0,333.0 968.0,332.0 988.0,326.0 1000.0,324.0 1016.0,325.0 1032.0,328.0 1046.0,328.0" fill="none" stroke="#ffff00"/>
<polyline points="0.0,95.0 11.5,104.3 23.0,104.3 30.0,111.0 34.6,124.0 39.0,118.0 46.0,117.0 53.0,121.6 62.4,124.0 69.3,132.0 76.0,131.0 83.0,132.0 90.0,139.6 99.2,150.0 108.5,146.5 117.7,151.0 124.6,163.8 130.4,180.0 136.0,198.4 143.0,210.0 146.5,214.6 154.6,208.8 161.5,201.9 168.4,191.5 175.3,190.3 180.0,190.4 185.5,191.8 189.7,195.2 193.9,200.8 198.0,207.7 202.2,217.4 207.7,228.5 211.9,235.4 217.4,243.7 221.5,250.6 227.0,254.8 232.6,256.2 241.0,255.5 246.5,253.4 252.0,243.7 260.0,234.0 272.5,210.8 280.0,205.4 287.7,200.8 297.0,197.0 307.7,201.5 317.0,208.5 326.0,220.8 338.5,221.5 347.7,214.6 355.4,216.0 363.0,221.5 369.0,231.5 375.4,239.0 390.0,244.0 400.0,241.0 410.0,235.0 420.0,234.0 430.0,238.0 438.0,236.0 446.0,228.0 450.0,223.0 457.0,210.0 465.8,202.8 472.3,203.8 483.0,212.5 489.5,225.4 496.0,234.0 504.6,240.5 515.4,241.5 530.5,238.3 537.0,242.6 543.4,251.0 552.0,262.0 562.8,272.8 573.5,281.4 582.0,288.0 593.0,294.8 603.7,297.0 614.5,292.6 627.4,287.2 636.0,286.0 646.8,287.2 657.5,290.5 666.0,297.0 677.0,309.8 687.7,321.7 698.5,327.0 709.2,325.0 720.0,319.5 730.8,312.0 740.0,307.7 744.0,306.0 755.0,309.0 770.0,315.0 781.0,325.0 790.0,334.0 798.0,337.0 811.0,334.0 820.0,327.0 833.9,329.9 842.2,333.3 853.2,338.9 861.5,334.7 869.9,328.5 878.2,324.3 886.5,326.4 897.6,332.0 903.0,335.4 914.2,336.0 920.0,336.8 936.0,340.0 948.0,335.0 960.0,329.0 972.0,325.0 984.0,320.0 996.0,315.0 1004.0,319.0 1016.0,327.0 1028.0,335.0 1040.0,337.0 1046.0,336.0" fill="none" stroke="#00ff00"/>
<path d="M5,147.5 L10.5,141 L16,147.5 L11.5,147.5 L11.5,153.5 L9.5,153.5 L9.5,147.5 Z" fill="#ff0000" shape-rendering="auto"/>
<path d="M34,145.5 L39.5,139 L45,145.5 L40.5,145.5 L40.5,151.5 L38.5,151.5 L38.5,145.5 Z" fill="#ff0000" shape-rendering="auto"/>
<path d="M99,172.5 L104.5,166 L110,172.5 L105.5,172.5 L105.5,178.5 L103.5,178.5 L103.5,172.5 Z" fill="#ff0000" shape-rendering="auto"/>
<path d="M328,240.5 L333.5,234 L339,240.5 L334.5,240.5 L334.5,246.5 L332.5,246.5 L332.5,240.5 Z" fill="#ff0000" shape-rendering="auto"/>
<path d="M359,247.5 L364.5,241 L370,247.5 L365.5,247.5 L365.5,253.5 L363.5,253.5 L363.5,247.5 Z" fill="#ff0000" shape-rendering="auto"/>
<path d="M430,260.5 L435.5,254 L441,260.5 L436.5,260.5 L436.5,266.5 L434.5,266.5 L434.5,260.5 Z" fill="#ff0000" shape-rendering="auto"/>
<path d="M499,267.5 L504.5,261 L510,267.5 L505.5,267.5 L505.5,273.5 L503.5,273.5 L503.5,267.5 Z" fill="#ff0000" shape-rendering="auto"/>
<path d="M515,259.5 L520.5,253 L526,259.5 L521.5,259.5 L521.5,265.5 L519.5,265.5 L519.5,259.5 Z" fill="#ff0000" shape-rendering="auto"/>
<path d="M572,306.5 L577.5,300 L583,306.5 L578.5,306.5 L578.5,312.5 L576.5,312.5 L576.5,306.5 Z" fill="#ff0000" shape-rendering="auto"/>
<path d="M758,329.5 L763.5,323 L769,329.5 L764.5,329.5 L764.5,335.5 L762.5,335.5 L762.5,329.5 Z" fill="#ff0000" shape-rendering="auto"/>
<path d="M845,355.5 L850.5,349 L856,355.5 L851.5,355.5 L851.5,361.5 L849.5,361.5 L849.5,355.5 Z" fill="#ff0000" shape-rendering="auto"/>
<path d="M892,348.5 L897.5,342 L903,348.5 L898.5,348.5 L898.5,354.5 L896.5,354.5 L896.5,348.5 Z" fill="#ff0000" shape-rendering="auto"/>
<path d="M924,355.5 L929.5,349 L935,355.5 L930.5,355.5 L930.5,361.5 L928.5,361.5 L928.5,355.5 Z" fill="#ff0000" shape-rendering="auto"/>
<path d="M1010,352.5 L1015.5,346 L1021,352.5 L1016.5,352.5 L1016.5,358.5 L1014.5,358.5 L1014.5,352.5 Z" fill="#ff0000" shape-rendering="auto"/>
<path d="M45.5,72 L47.5,72 L47.5,78 L52,78 L46.5,84.5 L41,78 L45.5,78 Z" fill="#00d000" shape-rendering="auto"/>
<path d="M77.5,120 L79.5,120 L79.5,126 L84,126 L78.5,132.5 L73,126 L77.5,126 Z" fill="#00d000" shape-rendering="auto"/>
<path d="M114.5,131 L116.5,131 L116.5,137 L121,137 L115.5,143.5 L110,137 L114.5,137 Z" fill="#00d000" shape-rendering="auto"/>
<path d="M187.5,196 L189.5,196 L189.5,202 L194,202 L188.5,208.5 L183,202 L187.5,202 Z" fill="#00d000" shape-rendering="auto"/>
<path d="M289.5,193 L291.5,193 L291.5,199 L296,199 L290.5,205.5 L285,199 L289.5,199 Z" fill="#00d000" shape-rendering="auto"/>
<path d="M305.5,192 L307.5,192 L307.5,198 L312,198 L306.5,204.5 L301,198 L305.5,198 Z" fill="#00d000" shape-rendering="auto"/>
<path d="M353.5,208 L355.5,208 L355.5,214 L360,214 L354.5,220.5 L349,214 L353.5,214 Z" fill="#00d000" shape-rendering="auto"/>
<path d="M423.5,228 L425.5,228 L425.5,234 L430,234 L424.5,240.5 L419,234 L423.5,234 Z" fill="#00d000" shape-rendering="auto"/>
<path d="M471.5,182 L473.5,182 L473.5,188 L478,188 L472.5,194.5 L467,188 L471.5,188 Z" fill="#00d000" shape-rendering="auto"/>
<path d="M539.5,247 L541.5,247 L541.5,253 L546,253 L540.5,259.5 L535,253 L539.5,253 Z" fill="#00d000" shape-rendering="auto"/>
<path d="M582.5,284 L584.5,284 L584.5,290 L589,290 L583.5,296.5 L578,290 L582.5,290 Z" fill="#00d000" shape-rendering="auto"/>
<path d="M641.5,279 L643.5,279 L643.5,285 L648,285 L642.5,291.5 L637,285 L641.5,285 Z" fill="#00d000" shape-rendering="auto"/>
<path d="M747.5,305 L749.5,305 L749.5,311 L754,311 L748.5,317.5 L743,311 L747.5,311 Z" fill="#00d000" shape-rendering="auto"/>
<path d="M832.5,329 L834.5,329 L834.5,335 L839,335 L833.5,341.5 L828,335 L832.5,335 Z" fill="#00d000" shape-rendering="auto"/>
<path d="M886.5,329 L888.5,329 L888.5,335 L893,335 L887.5,341.5 L882,335 L886.5,335 Z" fill="#00d000" shape-rendering="auto"/>
<path d="M1003.5,317 L1005.5,317 L1005.5,323 L1010,323 L1004.5,329.5 L999,323 L1003.5,323 Z" fill="#00d000" shape-rendering="auto"/>
<path d="M1024.5,316 L1026.5,316 L1026.5,322 L1031,322 L1025.5,328.5 L1020,322 L1024.5,322 Z" fill="#00d000" shape-rendering="auto"/>
<text x="35" y="152" fill="#ff0000" font-size="14" font-weight="bold" text-anchor="start" >B</text>
<text x="430" y="266" fill="#ff0000" font-size="14" font-weight="bold" text-anchor="start" >B</text>
<text x="856" y="354" fill="#ff0000" font-size="14" font-weight="bold" text-anchor="start" >B</text>
<text x="946" y="354" fill="#ff0000" font-size="14" font-weight="bold" text-anchor="start" >B</text>
<text x="1043" y="359" fill="#ff0000" font-size="14" font-weight="bold" text-anchor="start" >B</text>
<polygon points="438.00,247.20 439.27,250.25 442.57,250.52 440.05,252.67 440.82,255.88 438.00,254.16 435.18,255.88 435.95,252.67 433.43,250.52 436.73,250.25" fill="#ff00ff" shape-rendering="auto"/><text x="444" y="257" fill="#ff00ff" font-size="11" font-weight="normal" text-anchor="start" >M</text>
<polygon points="720.00,323.20 721.27,326.25 724.57,326.52 722.05,328.67 722.82,331.88 720.00,330.16 717.18,331.88 717.95,328.67 715.43,326.52 718.73,326.25" fill="#ff00ff" shape-rendering="auto"/><text x="726" y="333" fill="#ff00ff" font-size="11" font-weight="normal" text-anchor="start" >M</text>
<polygon points="808.00,329.20 809.27,332.25 812.57,332.52 810.05,334.67 810.82,337.88 808.00,336.16 805.18,337.88 805.95,334.67 803.43,332.52 806.73,332.25" fill="#ff00ff" shape-rendering="auto"/><text x="814" y="339" fill="#ff00ff" font-size="11" font-weight="normal" text-anchor="start" >M</text>
<polygon points="944.00,344.20 945.27,347.25 948.57,347.52 946.05,349.67 946.82,352.88 944.00,351.16 941.18,352.88 941.95,349.67 939.43,347.52 942.73,347.25" fill="#ff00ff" shape-rendering="auto"/><text x="950" y="354" fill="#ff00ff" font-size="11" font-weight="normal" text-anchor="start" >M</text>
<circle cx="108.5" cy="174.5" r="4" fill="none" stroke="#ff00ff" stroke-width="1.3"/><circle cx="108.5" cy="174.5" r="1.8" fill="none" stroke="#ff00ff" stroke-width="1.2"/><text x="114" y="179" fill="#ff00ff" font-size="11" font-weight="normal" text-anchor="start" >K</text>
<circle cx="805.5" cy="348.5" r="4" fill="none" stroke="#ff00ff" stroke-width="1.3"/><circle cx="805.5" cy="348.5" r="1.8" fill="none" stroke="#ff00ff" stroke-width="1.2"/><text x="811" y="353" fill="#ff00ff" font-size="11" font-weight="normal" text-anchor="start" >K</text>
<circle cx="1008.5" cy="305.5" r="4" fill="none" stroke="#00c000" stroke-width="1.3"/><circle cx="1008.5" cy="305.5" r="1.8" fill="none" stroke="#00c000" stroke-width="1.2"/><text x="1014" y="310" fill="#00c000" font-size="11" font-weight="normal" text-anchor="start" >K</text>
<path d="M108,180 L112,184 L108,188 L104,184 Z" fill="#ff00ff"/><text x="114" y="189" fill="#ff00ff" font-size="11" font-weight="normal" text-anchor="start" >R</text>
<path d="M859,362 L863,366 L859,370 L855,366 Z" fill="#ff00ff"/><text x="865" y="371" fill="#ff00ff" font-size="11" font-weight="normal" text-anchor="start" >R</text>
<!-- lower title -->
<circle cx="8" cy="405" r="6" fill="#808080"/>
<path d="M5,404 L8,407 L11,404" stroke="#000" fill="none" stroke-width="1.2" shape-rendering="auto"/>
<g font-size="12">
<text x="18" y="410" fill="#d8d8d8">股朋指标网</text>
<text x="83" y="410" fill="#ff2020" textLength="53.5" lengthAdjust="spacingAndGlyphs">趋势: 6.20</text>
<text x="142" y="410" fill="#a8a8a8">上轨: 6.30</text>
<text x="201" y="410" fill="#a8a8a8">下轨: 6.10</text>
<text x="259" y="410" fill="#a8a8a8">上极: 6.40</text>
<text x="317" y="410" fill="#a8a8a8">下极: 6.00</text>
<text x="378.4" y="410" fill="#00ff00" textLength="52" lengthAdjust="spacingAndGlyphs">MA5: 6.13</text>
<text x="436.5" y="410" fill="#ffff00" textLength="59" lengthAdjust="spacingAndGlyphs">MA13: 6.19</text>
<text x="501" y="410" fill="#00ff00">: 6.20</text>
<text x="536" y="410" fill="#00ff00">: 6.30</text>
</g>
<g stroke="#c00000">
<line x1="1070" y1="416.5" x2="1076" y2="416.5"/>
<line x1="1070" y1="436.5" x2="1073" y2="436.5"/>
<line x1="1070" y1="456.5" x2="1076" y2="456.5"/>
<line x1="1070" y1="475.5" x2="1073" y2="475.5"/>
<line x1="1070" y1="494.5" x2="1076" y2="494.5"/>
<line x1="1070" y1="514.5" x2="1073" y2="514.5"/>
<line x1="1070" y1="534.5" x2="1076" y2="534.5"/>
<line x1="1070" y1="553.5" x2="1073" y2="553.5"/>
<line x1="1070" y1="572.5" x2="1076" y2="572.5"/>
</g>
<g font-size="12" fill="#ff3030" text-anchor="end">
<text x="1115" y="422">8.50</text>
<text x="1115" y="460">8.00</text>
<text x="1115" y="500">7.50</text>
<text x="1115" y="538">7.00</text>
<text x="1115" y="578">6.50</text>
</g>
<line x1="1" y1="455.5" x2="1068" y2="455.5" stroke="#a00000" stroke-dasharray="1 3"/><line x1="1" y1="494.5" x2="1068" y2="494.5" stroke="#a00000" stroke-dasharray="1 3"/><line x1="1" y1="533.5" x2="1068" y2="533.5" stroke="#a00000" stroke-dasharray="1 3"/><line x1="1" y1="572.5" x2="1068" y2="572.5" stroke="#a00000" stroke-dasharray="1 3"/><line x1="1" y1="611.5" x2="1068" y2="611.5" stroke="#a00000" stroke-dasharray="1 3"/>
<polyline points="0.0,416.0 19.7,417.7 49.0,419.7 66.5,422.0 74.0,428.3 86.0,437.0 103.4,442.0 113.0,449.0 128.0,444.3 140.0,439.4 148.0,445.6 157.6,453.0 172.4,459.0 180.0,466.9 192.9,471.2 205.8,477.7 214.4,488.4 229.5,492.7 246.7,491.7 261.8,496.0 276.9,500.3 289.8,503.5 300.6,499.2 311.3,497.7 330.7,500.3 345.8,502.4 356.5,506.7 369.5,503.5 380.0,504.6 391.5,508.0 413.0,518.8 430.3,520.9 443.2,519.8 456.0,518.8 464.7,511.2 477.6,510.1 499.2,510.1 520.7,510.1 537.9,510.1 546.5,508.0 559.5,510.1 570.0,514.4 572.9,520.5 585.8,524.8 603.0,528.0 616.0,533.4 628.9,543.0 641.8,554.9 661.2,563.5 676.3,560.3 693.5,557.0 715.0,559.2 732.2,564.6 749.4,570.0 760.0,574.3 771.2,577.2 782.6,575.5 806.7,575.5 825.0,575.5 835.0,576.9 849.2,582.6 857.6,586.1 867.6,586.8 874.6,589.4 891.6,589.4 910.0,589.4 921.0,587.8 927.0,590.0 945.0,590.0 949.6,587.8 978.2,587.0 993.2,583.3 1017.3,581.8 1026.3,582.6 1041.4,581.0 1045.9,579.5" fill="none" stroke="#9a9a9a"/>
<polyline points="0.0,473.4 19.7,475.0 49.0,475.0 56.7,472.7 73.9,474.0 88.7,478.8 103.4,482.5 115.8,486.2 128.0,503.4 140.4,511.0 157.6,515.8 180.0,521.8 197.2,526.1 210.0,534.7 223.0,542.3 236.0,545.5 248.9,549.8 266.0,550.2 283.3,550.2 300.6,549.8 317.8,545.5 335.0,536.9 352.2,530.4 360.8,531.5 380.0,549.8 400.1,542.4 426.0,543.5 447.5,544.6 469.0,544.6 482.0,542.4 499.2,543.5 516.4,543.5 533.6,543.5 546.5,548.9 559.5,554.3 570.0,560.7 581.5,564.6 603.0,575.4 624.6,574.3 646.1,571.0 659.0,575.4 680.6,586.1 702.1,591.5 723.6,594.7 745.1,594.7 760.0,594.7 771.2,594.6 785.4,597.5 806.7,598.9 823.7,598.9 837.8,600.3 849.2,601.7 871.8,601.0 891.6,601.7 910.0,601.0 922.6,602.1 945.0,602.9 970.7,602.9 1000.0,603.0 1046.0,603.0" fill="none" stroke="#9a9a9a"/>
<polyline points="0.0,492.4 19.7,494.8 49.0,496.0 54.2,491.0 73.9,493.6 93.6,494.8 108.4,503.4 123.0,513.3 138.0,533.0 152.7,536.7 172.4,540.4 180.0,540.1 197.2,543.3 214.4,553.0 231.7,562.7 246.7,569.2 266.0,567.0 287.6,564.9 309.2,563.8 326.4,556.3 343.6,543.3 354.4,539.0 365.1,541.2 380.0,552.0 398.0,552.1 413.0,550.0 430.3,553.2 447.5,553.2 469.0,556.4 486.3,553.2 503.5,554.3 520.7,555.4 533.6,554.3 546.5,559.7 559.5,569.3 570.0,576.9 581.5,578.6 594.4,585.0 607.4,590.4 624.6,589.3 641.8,582.9 654.7,580.7 667.6,585.0 684.9,595.8 702.1,602.3 715.0,605.5 736.5,604.4 749.4,601.2 760.0,601.2 771.2,601.7 785.4,606.0 806.7,606.7 823.7,607.4 840.7,608.1 857.6,608.1 869.0,606.0 891.6,605.2 910.0,605.2 921.0,608.1 930.0,607.4 945.0,608.1 970.7,608.1 1000.0,608.0 1046.0,608.0" fill="none" stroke="#9a9a9a"/>
<polyline points="0.0,435.7 24.6,437.0 49.0,437.0 64.0,439.4 78.8,444.3 88.7,453.0 103.4,455.4 113.3,460.3 133.0,462.8 147.8,469.0 167.5,476.4 180.0,485.2 195.0,490.6 208.0,498.1 214.4,504.6 227.4,510.0 244.6,512.1 261.8,515.3 279.0,518.6 292.0,516.4 304.9,514.3 330.7,513.2 352.2,514.3 369.5,514.3 380.0,516.4 387.2,517.7 408.8,526.3 430.3,527.4 447.5,528.4 460.4,523.0 473.3,520.9 499.2,520.9 525.0,520.9 542.2,522.0 559.5,526.3 570.0,530.6 581.5,538.8 603.0,544.1 620.3,550.6 637.5,559.2 652.6,564.6 672.0,567.8 693.5,568.9 715.0,571.0 732.2,575.4 749.4,578.6 760.0,581.8 764.2,582.6 778.3,583.3 806.7,583.3 825.0,583.7 835.0,585.4 849.2,590.4 857.6,591.8 867.6,592.5 874.6,594.2 891.6,593.2 910.0,593.2 925.6,593.1 945.0,593.8 949.6,593.1 972.2,592.3 990.2,589.3 1020.3,588.6 1045.9,587.4" fill="none" stroke="#00ff00"/>
<polyline points="0.0,451.7 9.9,453.0 22.2,450.5 34.5,455.4 49.0,459.0 64.0,462.8 78.8,469.0 98.5,474.0 113.3,481.3 128.0,493.6 142.9,501.0 162.6,507.0 180.0,513.2 201.5,519.7 218.8,527.2 236.0,535.8 251.0,543.3 266.0,541.2 283.3,532.6 300.6,525.0 315.6,519.7 330.7,520.7 348.0,522.9 365.1,527.2 380.0,531.5 387.2,533.8 408.8,537.0 430.3,539.2 447.5,536.0 464.7,530.6 477.6,528.4 503.5,528.4 520.7,531.7 537.9,537.0 555.1,544.6 570.0,552.1 577.2,554.9 594.4,562.4 611.7,571.0 628.9,572.1 646.1,571.0 663.3,572.1 680.6,577.5 697.8,582.9 715.0,588.3 732.2,590.4 745.1,588.3 760.0,587.2 771.2,587.5 785.4,590.4 806.7,593.2 825.0,595.3 842.0,598.2 857.6,598.2 874.6,597.5 891.6,597.5 910.0,598.9 922.6,599.1 945.0,599.8 960.2,597.6 975.2,596.1 990.2,593.8 1005.3,592.3 1020.3,592.3 1032.3,594.6 1045.9,596.1" fill="none" stroke="#ffff00"/>
<polyline points="0.0,453.0 19.7,455.4 44.3,456.7 61.6,456.2 73.9,461.6 88.7,467.7 103.4,471.4 118.2,477.6 138.0,487.4 157.6,494.8 180.0,502.4 192.9,507.8 205.8,514.3 223.0,525.0 240.3,530.4 257.5,532.6 274.7,533.6 292.0,533.6 309.2,531.5 326.4,528.3 343.6,524.0 360.8,522.9 380.0,526.0 387.2,528.4 404.4,532.7 421.7,536.0 438.9,537.0 460.4,533.8 482.0,531.7 503.5,531.7 525.0,531.7 542.2,533.8 559.5,541.4 570.0,546.7 577.2,548.4 598.8,557.0 620.3,563.5 637.5,567.8 654.7,570.0 672.0,573.2 689.2,577.5 710.7,581.8 732.2,585.0 749.4,586.1 760.0,586.1 771.2,587.1 785.4,589.0 806.7,590.4 823.7,591.8 837.8,593.2 846.3,596.0 863.3,596.7 877.5,596.0 891.6,596.7 910.0,596.7 915.0,596.8 930.0,598.3 945.0,598.3 960.2,596.8 975.2,596.1 990.2,595.8 1005.3,595.3 1020.3,594.9 1045.9,594.6" fill="none" stroke="#ff0000" stroke-width="2"/>
<polyline points="0.0,452.2 19.7,454.6 44.3,455.9 61.6,455.4 73.9,460.8 88.7,466.9 103.4,470.6 118.2,476.8 138.0,486.6 157.6,494.0 180.0,501.6 192.9,507.0 205.8,513.5 223.0,524.2 240.3,529.6 257.5,531.8 274.7,532.8 292.0,532.8 309.2,530.7 326.4,527.5 343.6,523.2 360.8,522.1 380.0,525.2 387.2,527.6 404.4,531.9 421.7,535.2 438.9,536.2 460.4,533.0 482.0,530.9 503.5,530.9 525.0,530.9 542.2,533.0 559.5,540.6 570.0,545.9 577.2,547.6 598.8,556.2 620.3,562.7 637.5,567.0 654.7,569.2 672.0,572.4 689.2,576.7 710.7,581.0 732.2,584.2 749.4,585.3 760.0,585.3 771.2,586.3 785.4,588.2 806.7,589.6 823.7,591.0 837.8,592.4 846.3,595.2 863.3,595.9 877.5,595.2 891.6,595.9 910.0,595.9 915.0,596.0 930.0,597.5 945.0,597.5 960.2,596.0 975.2,595.3 990.2,595.0 1005.3,594.5 1020.3,594.1 1045.9,593.8" fill="none" stroke="#00ff00" stroke-dasharray="3 3"/>
<polyline points="0.0,450.5 9.9,455.4 22.2,455.4 29.6,460.3 34.5,467.7 44.3,464.0 54.2,465.3 64.0,469.0 73.9,474.0 83.7,476.4 96.0,483.7 108.4,485.0 118.2,486.2 125.6,496.0 133.0,510.8 142.9,523.0 147.8,524.4 157.6,517.0 170.0,508.4 180.0,508.9 192.9,512.1 201.5,526.1 210.0,536.9 223.0,547.6 231.7,550.9 246.7,548.7 259.7,534.7 270.4,524.0 279.0,517.5 296.3,514.3 313.5,519.7 326.4,528.3 339.3,527.2 350.0,522.9 363.0,527.2 373.8,539.0 380.0,541.2 391.5,543.5 404.4,540.3 417.4,537.0 434.6,539.2 447.5,531.7 456.1,525.2 466.9,517.7 477.6,519.8 488.4,526.3 494.9,534.9 505.6,540.3 520.7,542.4 533.6,541.4 546.5,546.7 559.5,556.4 570.0,565.0 572.9,566.7 588.0,573.2 603.0,575.4 616.0,573.2 631.0,568.9 646.1,570.0 659.0,574.3 672.0,580.7 684.9,589.3 699.9,594.7 715.0,592.6 727.9,589.3 740.8,582.9 749.4,581.8 760.0,585.0 771.2,588.2 782.6,592.5 795.3,601.7 806.7,598.9 815.2,596.0 829.3,595.3 837.8,596.7 852.0,601.0 863.3,598.9 874.6,596.0 888.8,595.3 900.1,598.9 910.0,598.9 915.0,599.8 922.6,602.9 937.6,601.4 949.6,597.6 964.7,595.3 978.2,593.1 990.2,588.6 999.2,587.8 1008.3,591.6 1020.3,594.6 1030.8,597.6 1045.9,594.6" fill="none" stroke="#00ff00"/>
<path d="M4,485.5 L9.5,479 L15,485.5 L10.5,485.5 L10.5,491.5 L8.5,491.5 L8.5,485.5 Z" fill="#ff0000" shape-rendering="auto"/>
<path d="M34,484.5 L39.5,478 L45,484.5 L40.5,484.5 L40.5,490.5 L38.5,490.5 L38.5,484.5 Z" fill="#ff0000" shape-rendering="auto"/>
<path d="M97,501.5 L102.5,495 L108,501.5 L103.5,501.5 L103.5,507.5 L101.5,507.5 L101.5,501.5 Z" fill="#ff0000" shape-rendering="auto"/>
<path d="M328,544.5 L333.5,538 L339,544.5 L334.5,544.5 L334.5,550.5 L332.5,550.5 L332.5,544.5 Z" fill="#ff0000" shape-rendering="auto"/>
<path d="M359,547.5 L364.5,541 L370,547.5 L365.5,547.5 L365.5,553.5 L363.5,553.5 L363.5,547.5 Z" fill="#ff0000" shape-rendering="auto"/>
<path d="M429,556.5 L434.5,550 L440,556.5 L435.5,556.5 L435.5,562.5 L433.5,562.5 L433.5,556.5 Z" fill="#ff0000" shape-rendering="auto"/>
<path d="M499,560.5 L504.5,554 L510,560.5 L505.5,560.5 L505.5,566.5 L503.5,566.5 L503.5,560.5 Z" fill="#ff0000" shape-rendering="auto"/>
<path d="M515,555.5 L520.5,549 L526,555.5 L521.5,555.5 L521.5,561.5 L519.5,561.5 L519.5,555.5 Z" fill="#ff0000" shape-rendering="auto"/>
<path d="M573,585.5 L578.5,579 L584,585.5 L579.5,585.5 L579.5,591.5 L577.5,591.5 L577.5,585.5 Z" fill="#ff0000" shape-rendering="auto"/>
<path d="M759,598.5 L764.5,592 L770,598.5 L765.5,598.5 L765.5,604.5 L763.5,604.5 L763.5,598.5 Z" fill="#ff0000" shape-rendering="auto"/>
<path d="M845,615.5 L850.5,609 L856,615.5 L851.5,615.5 L851.5,621.5 L849.5,621.5 L849.5,615.5 Z" fill="#ff0000" shape-rendering="auto"/>
<path d="M892,610.5 L897.5,604 L903,610.5 L898.5,610.5 L898.5,616.5 L896.5,616.5 L896.5,610.5 Z" fill="#ff0000" shape-rendering="auto"/>
<path d="M924,615.5 L929.5,609 L935,615.5 L930.5,615.5 L930.5,621.5 L928.5,621.5 L928.5,615.5 Z" fill="#ff0000" shape-rendering="auto"/>
<path d="M45.5,437 L47.5,437 L47.5,443 L52,443 L46.5,449.5 L41,443 L45.5,443 Z" fill="#00d000" shape-rendering="auto"/>
<path d="M77.5,468 L79.5,468 L79.5,474 L84,474 L78.5,480.5 L73,474 L77.5,474 Z" fill="#00d000" shape-rendering="auto"/>
<path d="M113.5,474 L115.5,474 L115.5,480 L120,480 L114.5,486.5 L109,480 L113.5,480 Z" fill="#00d000" shape-rendering="auto"/>
<path d="M187.5,514 L189.5,514 L189.5,520 L194,520 L188.5,526.5 L183,520 L187.5,520 Z" fill="#00d000" shape-rendering="auto"/>
<path d="M290.5,512 L292.5,512 L292.5,518 L297,518 L291.5,524.5 L286,518 L290.5,518 Z" fill="#00d000" shape-rendering="auto"/>
<path d="M306.5,511 L308.5,511 L308.5,517 L313,517 L307.5,523.5 L302,517 L306.5,517 Z" fill="#00d000" shape-rendering="auto"/>
<path d="M354.5,521 L356.5,521 L356.5,527 L361,527 L355.5,533.5 L350,527 L354.5,527 Z" fill="#00d000" shape-rendering="auto"/>
<path d="M423.5,534 L425.5,534 L425.5,540 L430,540 L424.5,546.5 L419,540 L423.5,540 Z" fill="#00d000" shape-rendering="auto"/>
<path d="M471.5,507 L473.5,507 L473.5,513 L478,513 L472.5,519.5 L467,513 L471.5,513 Z" fill="#00d000" shape-rendering="auto"/>
<path d="M540.5,545 L542.5,545 L542.5,551 L547,551 L541.5,557.5 L536,551 L540.5,551 Z" fill="#00d000" shape-rendering="auto"/>
<path d="M582.5,569 L584.5,569 L584.5,575 L589,575 L583.5,581.5 L578,575 L582.5,575 Z" fill="#00d000" shape-rendering="auto"/>
<path d="M641.5,567 L643.5,567 L643.5,573 L648,573 L642.5,579.5 L637,573 L641.5,573 Z" fill="#00d000" shape-rendering="auto"/>
<path d="M747.5,582 L749.5,582 L749.5,588 L754,588 L748.5,594.5 L743,588 L747.5,588 Z" fill="#00d000" shape-rendering="auto"/>
<path d="M833.5,597 L835.5,597 L835.5,603 L840,603 L834.5,609.5 L829,603 L833.5,603 Z" fill="#00d000" shape-rendering="auto"/>
<path d="M886.5,597 L888.5,597 L888.5,603 L893,603 L887.5,609.5 L882,603 L886.5,603 Z" fill="#00d000" shape-rendering="auto"/>
<path d="M1003.5,589 L1005.5,589 L1005.5,595 L1010,595 L1004.5,601.5 L999,595 L1003.5,595 Z" fill="#00d000" shape-rendering="auto"/>
<path d="M1024.5,589 L1026.5,589 L1026.5,595 L1031,595 L1025.5,601.5 L1020,595 L1024.5,595 Z" fill="#00d000" shape-rendering="auto"/>
<text x="36" y="491" fill="#ff0000" font-size="13" font-weight="bold" text-anchor="start" >B</text>
<text x="430" y="562" fill="#ff0000" font-size="13" font-weight="bold" text-anchor="start" >B</text>
<text x="855.5" y="616" fill="#ff0000" font-size="13" font-weight="bold" text-anchor="start" >B</text>
<text x="946.6" y="616" fill="#ff0000" font-size="13" font-weight="bold" text-anchor="start" >B</text>
<polygon points="440.00,543.20 441.27,546.25 444.57,546.52 442.05,548.67 442.82,551.88 440.00,550.16 437.18,551.88 437.95,548.67 435.43,546.52 438.73,546.25" fill="#ff00ff" shape-rendering="auto"/><text x="446" y="553" fill="#ff00ff" font-size="11" font-weight="normal" text-anchor="start" >M</text>
<polygon points="720.00,591.20 721.27,594.25 724.57,594.52 722.05,596.67 722.82,599.88 720.00,598.16 717.18,599.88 717.95,596.67 715.43,594.52 718.73,594.25" fill="#ff00ff" shape-rendering="auto"/><text x="726" y="601" fill="#ff00ff" font-size="11" font-weight="normal" text-anchor="start" >M</text>
<polygon points="812.00,594.20 813.27,597.25 816.57,597.52 814.05,599.67 814.82,602.88 812.00,601.16 809.18,602.88 809.95,599.67 807.43,597.52 810.73,597.25" fill="#ff00ff" shape-rendering="auto"/><text x="818" y="604" fill="#ff00ff" font-size="11" font-weight="normal" text-anchor="start" >M</text>
<polygon points="946.00,600.20 947.27,603.25 950.57,603.52 948.05,605.67 948.82,608.88 946.00,607.16 943.18,608.88 943.95,605.67 941.43,603.52 944.73,603.25" fill="#ff00ff" shape-rendering="auto"/><text x="952" y="610" fill="#ff00ff" font-size="11" font-weight="normal" text-anchor="start" >M</text>
<circle cx="107.5" cy="498.5" r="4" fill="none" stroke="#ff00ff" stroke-width="1.3"/><circle cx="107.5" cy="498.5" r="1.8" fill="none" stroke="#ff00ff" stroke-width="1.2"/><text x="113" y="503" fill="#ff00ff" font-size="11" font-weight="normal" text-anchor="start" >K</text>
<circle cx="806.5" cy="607.5" r="4" fill="none" stroke="#ff00ff" stroke-width="1.3"/><circle cx="806.5" cy="607.5" r="1.8" fill="none" stroke="#ff00ff" stroke-width="1.2"/><text x="812" y="612" fill="#ff00ff" font-size="11" font-weight="normal" text-anchor="start" >K</text>
<path d="M107,501 L111,505 L107,509 L103,505 Z" fill="#ff00ff"/><text x="113" y="510" fill="#ff00ff" font-size="11" font-weight="normal" text-anchor="start" >R</text>
<path d="M859.5,614 L863.5,618 L859.5,622 L855.5,618 Z" fill="#ff00ff"/><text x="865.5" y="623" fill="#ff00ff" font-size="11" font-weight="normal" text-anchor="start" >R</text>
<!-- date axis -->
<g stroke="#c00000">
<line x1="44.5" y1="630" x2="44.5" y2="646"/>
<line x1="145.5" y1="630" x2="145.5" y2="646"/>
<line x1="252.5" y1="630" x2="252.5" y2="646"/>
<line x1="374.5" y1="630" x2="374.5" y2="646"/>
<line x1="486.5" y1="630" x2="486.5" y2="646"/>
<line x1="603.5" y1="630" x2="603.5" y2="646"/>
<line x1="693.5" y1="630" x2="693.5" y2="646"/>
<line x1="800.5" y1="630" x2="800.5" y2="646"/>
<line x1="42.5" y1="647" x2="42.5" y2="650"/>
<line x1="73.5" y1="647" x2="73.5" y2="650"/>
<line x1="115.5" y1="647" x2="115.5" y2="650"/>
<line x1="145.5" y1="647" x2="145.5" y2="650"/>
<line x1="177.5" y1="647" x2="177.5" y2="650"/>
<line x1="207.5" y1="647" x2="207.5" y2="650"/>
<line x1="248.5" y1="647" x2="248.5" y2="650"/>
<line x1="299.5" y1="647" x2="299.5" y2="650"/>
<line x1="333.5" y1="647" x2="333.5" y2="650"/>
<line x1="365.5" y1="647" x2="365.5" y2="650"/>
<line x1="423.5" y1="647" x2="423.5" y2="650"/>
<line x1="481.5" y1="647" x2="481.5" y2="650"/>
<line x1="508.5" y1="647" x2="508.5" y2="650"/>
<line x1="536.5" y1="647" x2="536.5" y2="650"/>
<line x1="568.5" y1="647" x2="568.5" y2="650"/>
<line x1="600.5" y1="647" x2="600.5" y2="650"/>
<line x1="628.5" y1="647" x2="628.5" y2="650"/>
<line x1="664.5" y1="647" x2="664.5" y2="650"/>
<line x1="694.5" y1="647" x2="694.5" y2="650"/>
<line x1="734.5" y1="647" x2="734.5" y2="650"/>
<line x1="766.5" y1="647" x2="766.5" y2="650"/>
<line x1="807.5" y1="647" x2="807.5" y2="650"/>
<line x1="839.5" y1="647" x2="839.5" y2="650"/>
<line x1="871.5" y1="647" x2="871.5" y2="650"/>
<line x1="70.5" y1="631" x2="70.5" y2="633"/>
<line x1="96.5" y1="631" x2="96.5" y2="633"/>
<line x1="121.5" y1="631" x2="121.5" y2="633"/>
<line x1="172.5" y1="631" x2="172.5" y2="633"/>
<line x1="199.5" y1="631" x2="199.5" y2="633"/>
<line x1="226.5" y1="631" x2="226.5" y2="633"/>
<line x1="283.5" y1="631" x2="283.5" y2="633"/>
<line x1="313.5" y1="631" x2="313.5" y2="633"/>
<line x1="343.5" y1="631" x2="343.5" y2="633"/>
<line x1="370.5" y1="631" x2="370.5" y2="633"/>
<line x1="430.5" y1="631" x2="430.5" y2="633"/>
<line x1="458.5" y1="631" x2="458.5" y2="633"/>
<line x1="515.5" y1="631" x2="515.5" y2="633"/>
<line x1="545.5" y1="631" x2="545.5" y2="633"/>
<line x1="574.5" y1="631" x2="574.5" y2="633"/>
<line x1="627.5" y1="631" x2="627.5" y2="633"/>
<line x1="648.5" y1="631" x2="648.5" y2="633"/>
<line x1="671.5" y1="631" x2="671.5" y2="633"/>
<line x1="720.5" y1="631" x2="720.5" y2="633"/>
<line x1="747.5" y1="631" x2="747.5" y2="633"/>
<line x1="774.5" y1="631" x2="774.5" y2="633"/>
<line x1="831.5" y1="631" x2="831.5" y2="633"/>
<line x1="861.5" y1="631" x2="861.5" y2="633"/>
<line x1="951.5" y1="630" x2="951.5" y2="646"/>
</g>
<g font-size="12" fill="#ff3030">
<text x="3" y="643">2025年</text>
<text x="46" y="643">5</text>
<text x="147" y="643">6</text>
<text x="254" y="643">7</text>
<text x="376" y="643">8</text>
<text x="488" y="643">9</text>
<text x="605" y="643">10</text>
<text x="696" y="643">11</text>
<text x="802" y="643">12</text>
</g>
<rect x="874.5" y="631.5" width="77" height="15" fill="#000080" stroke="#7070c0"/>
<text x="876" y="643" font-size="12" fill="#ffffff">2025/12/19/五</text>
<!-- right strip -->
<g fill="#d0d0d0" font-size="12"><text x="1122" y="43">委</text><text x="1122" y="59">卖</text><text x="1122" y="77">卖</text><text x="1122" y="94">卖</text><text x="1122" y="112">卖</text><text x="1122" y="129">卖</text><text x="1122" y="156">买</text><text x="1122" y="174">买</text><text x="1122" y="193">买</text><text x="1122" y="212">买</text><text x="1122" y="230">买</text><text x="1122" y="253">现</text><text x="1122" y="272">涨</text><text x="1122" y="291">涨</text><text x="1122" y="310">总</text><text x="1122" y="329">外</text><text x="1122" y="352">换</text><text x="1122" y="371">净</text><text x="1122" y="390">收</text></g><text x="1122" y="413" font-size="12" fill="#ffff00">自</text><text x="1122" y="431" font-size="12" fill="#d0d0d0">交</text><g fill="#e0e0e0" font-size="12"><text x="1122" y="446">1</text><text x="1122" y="462">1</text><text x="1122" y="478">1</text><text x="1122" y="494">1</text><text x="1122" y="510">1</text><text x="1122" y="526">1</text><text x="1122" y="542">1</text><text x="1122" y="558">1</text><text x="1122" y="574">1</text><text x="1122" y="590">1</text></g><g stroke="#c00000"><line x1="1121" y1="25.5" x2="1130" y2="25.5"/><line x1="1121" y1="45.5" x2="1130" y2="45.5"/><line x1="1121" y1="143.5" x2="1130" y2="143.5"/><line x1="1121" y1="238.5" x2="1130" y2="238.5"/><line x1="1121" y1="335.5" x2="1130" y2="335.5"/><line x1="1121" y1="418.5" x2="1130" y2="418.5"/><line x1="1121" y1="435.5" x2="1130" y2="435.5"/></g>
<!-- watermark -->
<rect x="971" y="600" width="159" height="50" fill="#3b3535"/>
<text x="1050" y="622" font-size="19" font-weight="bold" fill="#ffffff" text-anchor="middle">指标公式网</text>
<text x="1053" y="642" font-size="15" fill="#f0f0f0" text-anchor="middle">www.zbgs3.com</text>
</svg>
</body></html>
